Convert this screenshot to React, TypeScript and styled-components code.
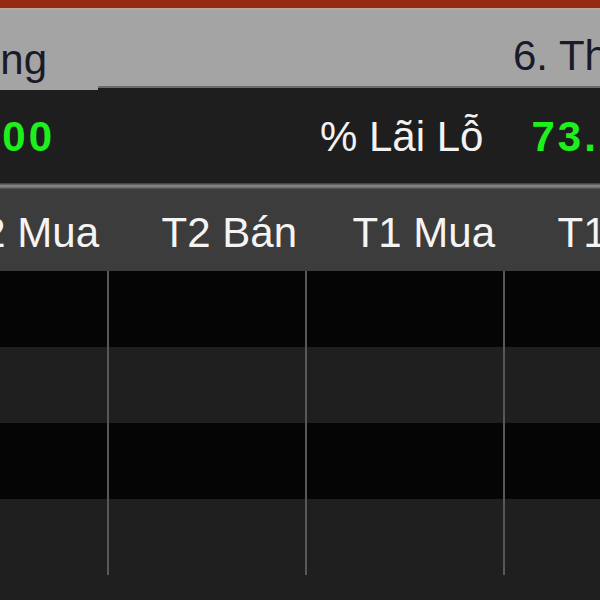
import styled, { createGlobalStyle } from 'styled-components';

const GlobalStyle = createGlobalStyle`
  html, body {
    margin: 0;
    padding: 0;
    background: #1f1f1f;
  }
  body {
    font-family: "Liberation Sans", Arial, sans-serif;
  }
`;

const columns = ['T2 Mua', 'T2 Bán', 'T1 Mua', 'T1 Bán'];
const rows = [0, 1, 2, 3];

function App() {
  return (
    <>
      <GlobalStyle />
      <Viewport>
        <Canvas>
          <TitleBar />
          <TabStrip>
            <Tab $active>5. Lệnh thường</Tab>
            <Tab>6. Thống kê</Tab>
          </TabStrip>
          <SummaryRow>
            <Field $width={144}>
              <Label>Lãi Lỗ</Label>
              <Value>1.250.000</Value>
            </Field>
            <Field>
              <Label>% Lãi Lỗ</Label>
              <Value>73.25%</Value>
            </Field>
          </SummaryRow>
          <Separator />
          <HeaderRow>
            {columns.map((c) => (
              <HeaderCell key={c}>{c}</HeaderCell>
            ))}
          </HeaderRow>
          {rows.map((r) => (
            <Row key={r} $odd={r % 2 === 1}>
              {columns.map((c) => (
                <Cell key={c} />
              ))}
            </Row>
          ))}
        </Canvas>
      </Viewport>
    </>
  );
}

const Viewport = styled.div`
  width: 600px;
  height: 600px;
  overflow: hidden;
  background: #1f1f1f;
`;

const Canvas = styled.div`
  width: 800px;
  margin-left: -89px;
  display: flex;
  flex-direction: column;
`;

const TitleBar = styled.div`
  height: 8px;
  background: #962a12;
  border-bottom: 2px solid #b9a6a3;
`;

const TabStrip = styled.div`
  display: flex;
  align-items: stretch;
  gap: 415px;
  height: 76px;
  background: #a4a4a4;
  border-bottom: 2px solid #6c6c6c;
`;

const Tab = styled.div<{ $active?: boolean }>`
  position: relative;
  display: flex;
  align-items: center;
  justify-content: ${(p) => (p.$active ? 'flex-end' : 'flex-start')};
  width: ${(p) => (p.$active ? '136px' : 'auto')};
  padding: ${(p) => (p.$active ? '20px 51px 0 0' : '16px 0 0 0')};
  margin-bottom: ${(p) => (p.$active ? '-4px' : '0')};
  background: #a4a4a4;
  color: #1a1a28;
  font-size: 42px;
  white-space: nowrap;
`;

const SummaryRow = styled.div`
  display: flex;
  align-items: center;
  gap: 265px;
  height: 95px;
  padding-top: 2px;
  box-sizing: border-box;
  background: #1e1e1e;
`;

const Field = styled.div<{ $width?: number }>`
  display: flex;
  align-items: center;
  justify-content: flex-end;
  gap: 48px;
  width: ${(p) => (p.$width ? `${p.$width}px` : 'auto')};
  flex-shrink: 0;
  white-space: nowrap;
`;

const Label = styled.span`
  color: #f2f2f2;
  font-size: 42px;
`;

const Value = styled.span`
  color: #1ef01e;
  font-size: 42px;
  font-weight: bold;
  letter-spacing: 3px;
`;

const Separator = styled.div`
  height: 6px;
  background: linear-gradient(#3a3a3a, #8e8e8e 50%, #4a4a4a);
`;

const HeaderRow = styled.div`
  display: grid;
  grid-template-columns: repeat(4, 198px);
  height: 82px;
  background: #3c3c3c;
`;

const HeaderCell = styled.div`
  display: flex;
  align-items: center;
  justify-content: flex-end;
  padding: 6px 10px 0 0;
  color: #f4f4f4;
  font-size: 42px;
  white-space: nowrap;
`;

const Row = styled.div<{ $odd: boolean }>`
  display: grid;
  grid-template-columns: repeat(4, 198px);
  height: 76px;
  background: ${(p) => (p.$odd ? '#1f1f1f' : '#050505')};
`;

const Cell = styled.div`
  border-right: 2px solid #585858;
`;

export default App;
